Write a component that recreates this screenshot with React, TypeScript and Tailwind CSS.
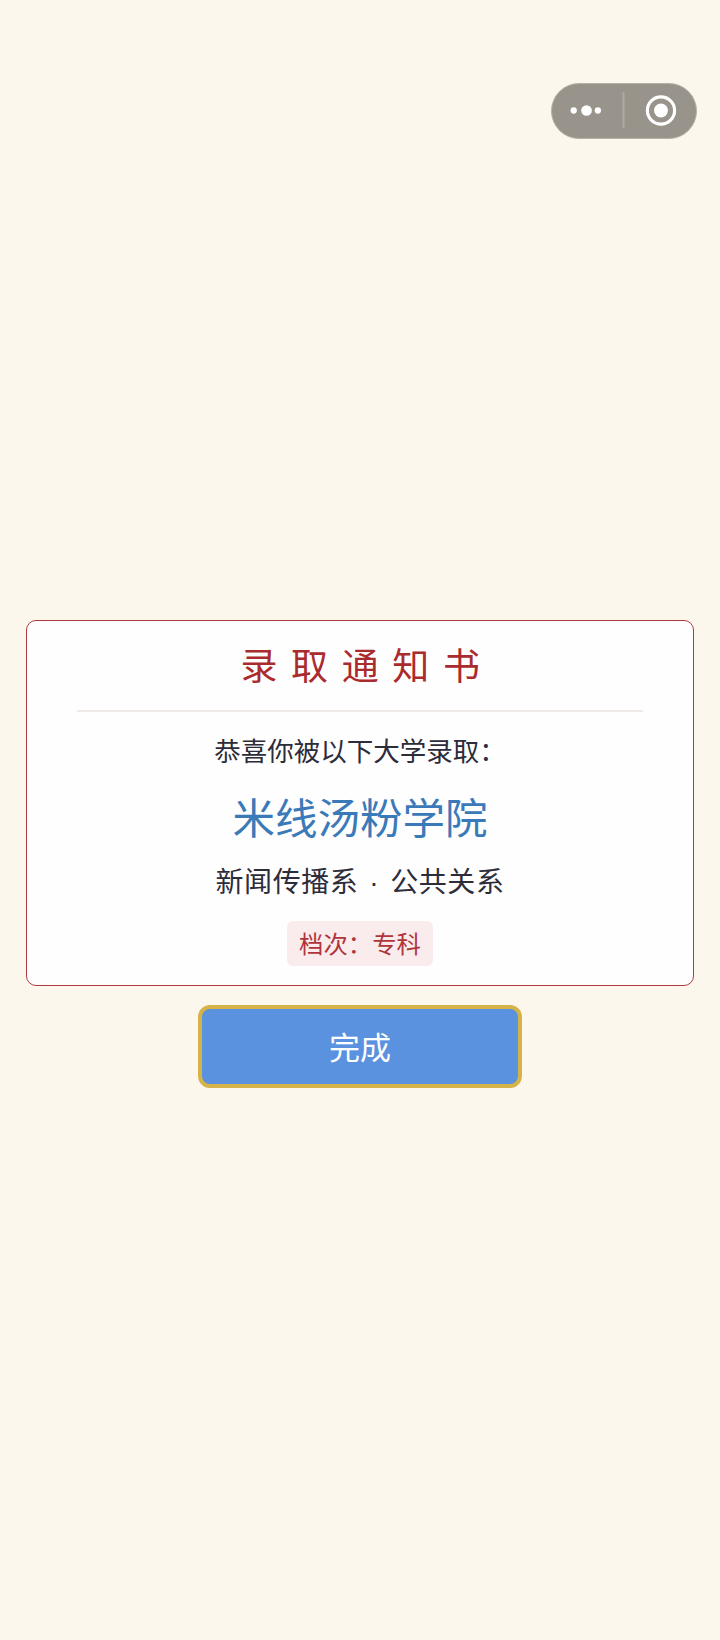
import React from 'react';

const cjk = '[font-family:"Noto_Sans_CJK_SC","Liberation_Sans",sans-serif]';

function CapsuleMenu() {
  return (
    <div className="absolute left-[551px] top-[83px] flex h-[56px] w-[146px] items-center rounded-full border border-[#b5b1a6] bg-[#98948b]">
      <svg width="146" height="56" viewBox="0 0 146 56" fill="none">
        <circle cx="22" cy="27.5" r="3.2" fill="#fff" />
        <circle cx="35" cy="27.5" r="5.4" fill="#fff" />
        <circle cx="46.5" cy="27.5" r="3.2" fill="#fff" />
        <rect x="71.5" y="9" width="2" height="36" fill="#b0aca2" />
        <circle cx="110.5" cy="27.5" r="13.8" stroke="#fff" strokeWidth="3.2" />
        <circle cx="110.5" cy="27.5" r="7" fill="#fff" />
      </svg>
    </div>
  );
}

export default function App() {
  return (
    <div className={`relative flex min-h-[1640px] w-[720px] flex-col items-center bg-[#fcf7ed] px-[26px] pt-[620px] ${cjk}`}>
      <CapsuleMenu />

      <div className="flex w-full flex-col items-center rounded-[10px] border-[1.5px] border-[#b0393f] bg-[#fffefe] px-[50px] pt-[18px] pb-[19px]">
        <div className="w-full border-b-2 border-[#efe9e8] pb-[21px] text-center">
          <h1 className="pl-[14px] text-[37px] leading-[50px] font-normal tracking-[13.6px] text-[#aa2b2d]">录取通知书</h1>
        </div>
        <p className="mt-[19px] text-[26.5px] leading-[38px] text-[#2c2c3a]">恭喜你被以下大学录取：</p>
        <p className="mt-[17px] text-[42.5px] leading-[60px] text-[#3a7ab8]">米线汤粉学院</p>
        <p className="mt-[14px] text-[28px] leading-[40px] tracking-[0.6px] text-[#2c2c3a]">
          新闻传播系 <span className="mx-[4px] font-['Liberation_Sans']">·</span> 公共关系
        </p>
        <div className="mt-[18px] flex h-[45px] items-center rounded-[6px] bg-[#faecec] px-[12px] text-[24.4px] text-[#b0353b]">
          档次：专科
        </div>
      </div>

      <button className="mt-[19px] flex h-[83px] w-[324px] items-center justify-center rounded-[12px] border-[4px] border-[#d6b348] bg-[#5a92df] text-[31px] text-white">
        完成
      </button>
    </div>
  );
}
